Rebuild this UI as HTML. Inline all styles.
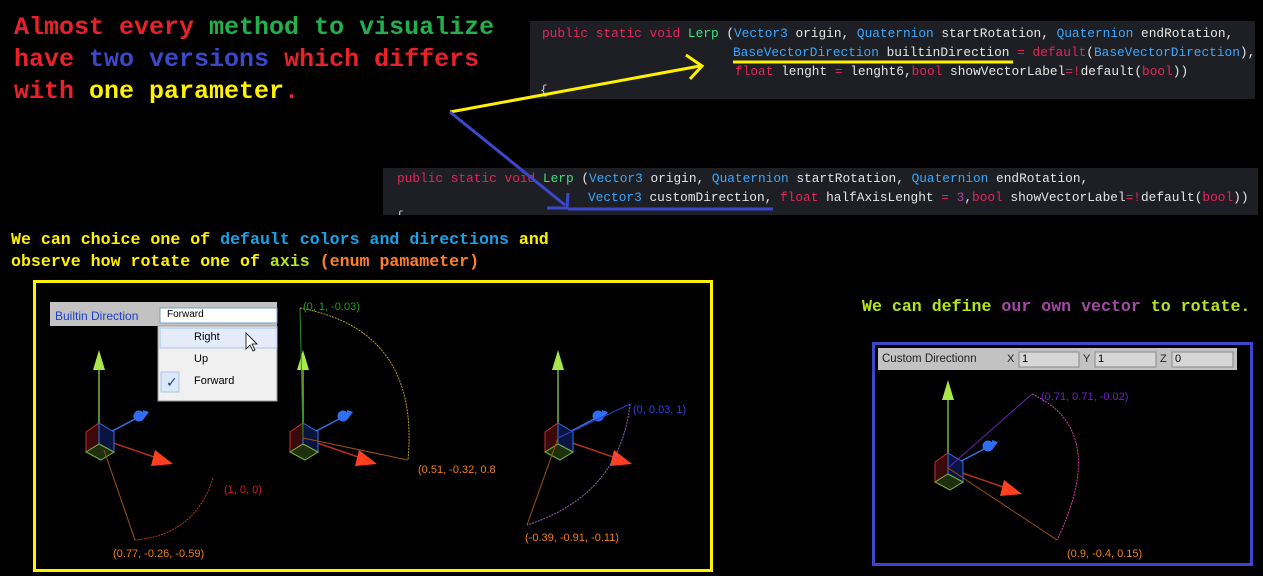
<!DOCTYPE html>
<html><head><meta charset="utf-8"><style>
*{margin:0;padding:0;box-sizing:border-box}
body{width:1263px;height:576px;background:#000;position:relative;overflow:hidden;font-family:"Liberation Mono",monospace}
.a{position:absolute;white-space:pre}
.t{font-weight:bold;font-size:25px;line-height:32px}
.c{font-size:12.8px;line-height:19px;color:#e6e6e6}
.s{font-weight:bold;font-size:16.6px;line-height:22px}
.k{color:#e8245a}.ty{color:#3aa8ff}.f{color:#3ee07a}
.r{color:#e8212a}.g{color:#22b04c}.b{color:#3c48cc}.y{color:#fff200}.cy{color:#1aa2e8}.o{color:#ff7f27}.lg{color:#b5e61d}.p{color:#a349a4}
.lbl{font-family:"Liberation Sans",sans-serif;font-size:11px}
</style></head><body>
<div class="a t" style="left:14px;top:12px"><span class="r">Almost every </span><span class="g">method to visualize</span>
<span class="r">have </span><span class="b">two versions </span><span class="r">which differs</span>
<span class="r">with </span><span class="y">one parameter</span><span class="r">.</span></div>

<div class="a" style="left:530px;top:21px;width:725px;height:78px;background:#1e1f24"></div>
<div class="a c" style="left:542px;top:24px"><span class="k">public static void </span><span class="f">Lerp</span> (<span class="ty">Vector3</span> origin, <span class="ty">Quaternion</span> startRotation, <span class="ty">Quaternion</span> endRotation,</div>
<div class="a c" style="left:733px;top:43px"><span class="ty">BaseVectorDirection</span> builtinDirection <span class="k">= default</span>(<span class="ty">BaseVectorDirection</span>),</div>
<div class="a c" style="left:735px;top:62px"><span class="k">float</span> lenght <span class="k">=</span> lenght6,<span class="k">bool</span> showVectorLabel<span class="k">=!</span>default(<span class="k">bool</span>))</div>
<div class="a c" style="left:540px;top:81px;color:#ccc">{</div>

<div class="a" style="left:383px;top:168px;width:875px;height:47px;background:#1e1f24"></div>
<div class="a c" style="left:397px;top:169px"><span class="k">public static void </span><span class="f">Lerp</span> (<span class="ty">Vector3</span> origin, <span class="ty">Quaternion</span> startRotation, <span class="ty">Quaternion</span> endRotation,</div>
<div class="a c" style="left:588px;top:188px"><span class="ty">Vector3</span> customDirection, <span class="k">float</span> halfAxisLenght <span class="k">=</span> <span class="p">3</span>,<span class="k">bool</span> showVectorLabel<span class="k">=!</span>default(<span class="k">bool</span>))</div>
<div class="a c" style="left:396px;top:207px;color:#ccc;height:8px;overflow:hidden">{</div>

<div class="a s" style="left:11px;top:229px"><span class="y">We can choice one of </span><span class="cy">default colors and directions </span><span class="y">and</span>
<span class="y">observe how rotate one of </span><span class="lg">axis </span><span class="o">(enum pamameter)</span></div>
<div class="a s" style="left:862px;top:296px"><span class="lg">We can define </span><span class="p">our own vector </span><span class="lg">to rotate.</span></div>

<svg class="a" style="left:0;top:0" width="1263" height="576">
<defs>
<g id="gz">
<line x1="0" y1="0" x2="0" y2="-75" stroke="#7db33a" stroke-width="1.5"/>
<polygon points="0,-88 -6,-68 6,-68" fill="#a8e84a"/>
<line x1="0" y1="0" x2="38" y2="-20" stroke="#3a6ee0" stroke-width="1.5"/>
<circle cx="40" cy="-22" r="5.5" fill="#2f6ef0"/>
<polygon points="44,-28 50,-26 44,-18" fill="#2f6ef0"/>
<line x1="0" y1="0" x2="58" y2="20" stroke="#b03020" stroke-width="1.5"/>
<polygon points="56,12 74,26 52,28" fill="#ff4020"/>
<polygon points="-13,-6 0,-15 0,6 -13,14" fill="#3a0a0a" stroke="#c03030"/>
<polygon points="0,-15 15,-6 15,14 0,6" fill="#0a1440" stroke="#3a6ee0"/>
<polygon points="-13,14 0,6 15,14 2,22" fill="#1c3010" stroke="#7db33a"/>
</g>
</defs>
<g stroke-width="3" fill="none">
<line x1="733" y1="62" x2="1013" y2="62" stroke="#fff200"/>
<polyline points="450,112 700,66" stroke="#fff200"/>
<polyline points="686,55 702,66 690,79" stroke="#fff200"/>
<polyline points="450,112 565,205" stroke="#3c48cc"/>
<polyline points="547,208 567,208 568,193" stroke="#3c48cc"/>
<line x1="568" y1="209" x2="773" y2="209" stroke="#3c48cc"/>
<rect x="34.5" y="281.5" width="677" height="289" stroke="#fff200"/>
<rect x="873.5" y="343.5" width="378" height="221" stroke="#3c48cc"/>
</g>
<rect x="50" y="302" width="227" height="24" fill="#c2c2c2"/>
<rect x="160" y="308" width="117" height="15" fill="#fff" stroke="#7a9cd0"/>
<rect x="158" y="326" width="119" height="75" fill="#f0f0f0" stroke="#999"/>
<rect x="160" y="328" width="117" height="20" fill="#e3ecf8" stroke="#aac4e8"/>
<rect x="161" y="372" width="18" height="20" fill="#dde8f6" stroke="#aac4e8"/>
<text x="166" y="387" fill="#1a3fa0" font-size="14" font-family="DejaVu Sans">✓</text>
<path d="M246 333 l0 16 l4 -4 l3 6 l2 -1 l-3 -6 l5 0 z" fill="#fff" stroke="#000" stroke-width="0.8"/>
<rect x="878" y="348" width="359" height="22" fill="#c2c2c2"/>
<rect x="1019" y="352" width="60" height="15" fill="#d6d6d6" stroke="#888"/>
<rect x="1095" y="352" width="61" height="15" fill="#d6d6d6" stroke="#888"/>
<rect x="1172" y="352" width="61" height="15" fill="#d6d6d6" stroke="#888"/>
<use href="#gz" x="99" y="438"/>
<use href="#gz" x="303" y="438"/>
<use href="#gz" x="558" y="438"/>
<use href="#gz" x="948" y="468"/>
<g fill="none" stroke-width="1">
<line x1="104" y1="450" x2="135" y2="540" stroke="#a05010"/>
<path d="M213 478 Q195 535 135 540" stroke="#c03020" stroke-dasharray="2 1"/>
<line x1="303" y1="438" x2="300" y2="308" stroke="#2a8a2a"/>
<line x1="303" y1="438" x2="408" y2="460" stroke="#a05010"/>
<path d="M300 308 Q420 330 408 460" stroke="#b0a020" stroke-dasharray="2 1"/>
<line x1="558" y1="438" x2="527" y2="525" stroke="#a05010"/>
<line x1="558" y1="438" x2="630" y2="404" stroke="#3040c0"/>
<path d="M630 404 Q620 495 527 525" stroke="#9060c0" stroke-dasharray="2 1"/>
<line x1="948" y1="468" x2="1032" y2="394" stroke="#6a20b0"/>
<line x1="948" y1="468" x2="1057" y2="540" stroke="#a05010"/>
<path d="M1032 394 Q1110 430 1057 540" stroke="#d040a0" stroke-dasharray="2 1"/>
</g>
</svg>
<div class="a lbl" style="left:55px;top:309px;font-size:12px;color:#1a3fcc">Builtin Direction</div>
<div class="a lbl" style="left:167px;top:309px;font-size:10px;color:#000">Forward</div>
<div class="a lbl" style="left:194px;top:331px;color:#000">Right</div>
<div class="a lbl" style="left:194px;top:353px;color:#000">Up</div>
<div class="a lbl" style="left:194px;top:375px;color:#000">Forward</div>
<div class="a lbl" style="left:882px;top:353px;font-size:11.5px;color:#222">Custom Directionn</div>
<div class="a lbl" style="left:1007px;top:353px;color:#222">X</div><div class="a lbl" style="left:1022px;top:353px;color:#000">1</div>
<div class="a lbl" style="left:1083px;top:353px;color:#222">Y</div><div class="a lbl" style="left:1098px;top:353px;color:#000">1</div>
<div class="a lbl" style="left:1160px;top:353px;color:#222">Z</div><div class="a lbl" style="left:1175px;top:353px;color:#000">0</div>
<div class="a lbl" style="left:224px;top:484px;color:#d02020">(1, 0, 0)</div>
<div class="a lbl" style="left:113px;top:548px;color:#f07f10">(0.77, -0.26, -0.59)</div>
<div class="a lbl" style="left:303px;top:301px;color:#20a020">(0, 1, -0.03)</div>
<div class="a lbl" style="left:418px;top:464px;color:#f07f10">(0.51, -0.32, 0.8</div>
<div class="a lbl" style="left:633px;top:404px;color:#3040e0">(0, 0.03, 1)</div>
<div class="a lbl" style="left:525px;top:532px;color:#f07f10">(-0.39, -0.91, -0.11)</div>
<div class="a lbl" style="left:1041px;top:391px;color:#7020d0">(0.71, 0.71, -0.02)</div>
<div class="a lbl" style="left:1067px;top:548px;color:#f07f10">(0.9, -0.4, 0.15)</div>
</body></html>
